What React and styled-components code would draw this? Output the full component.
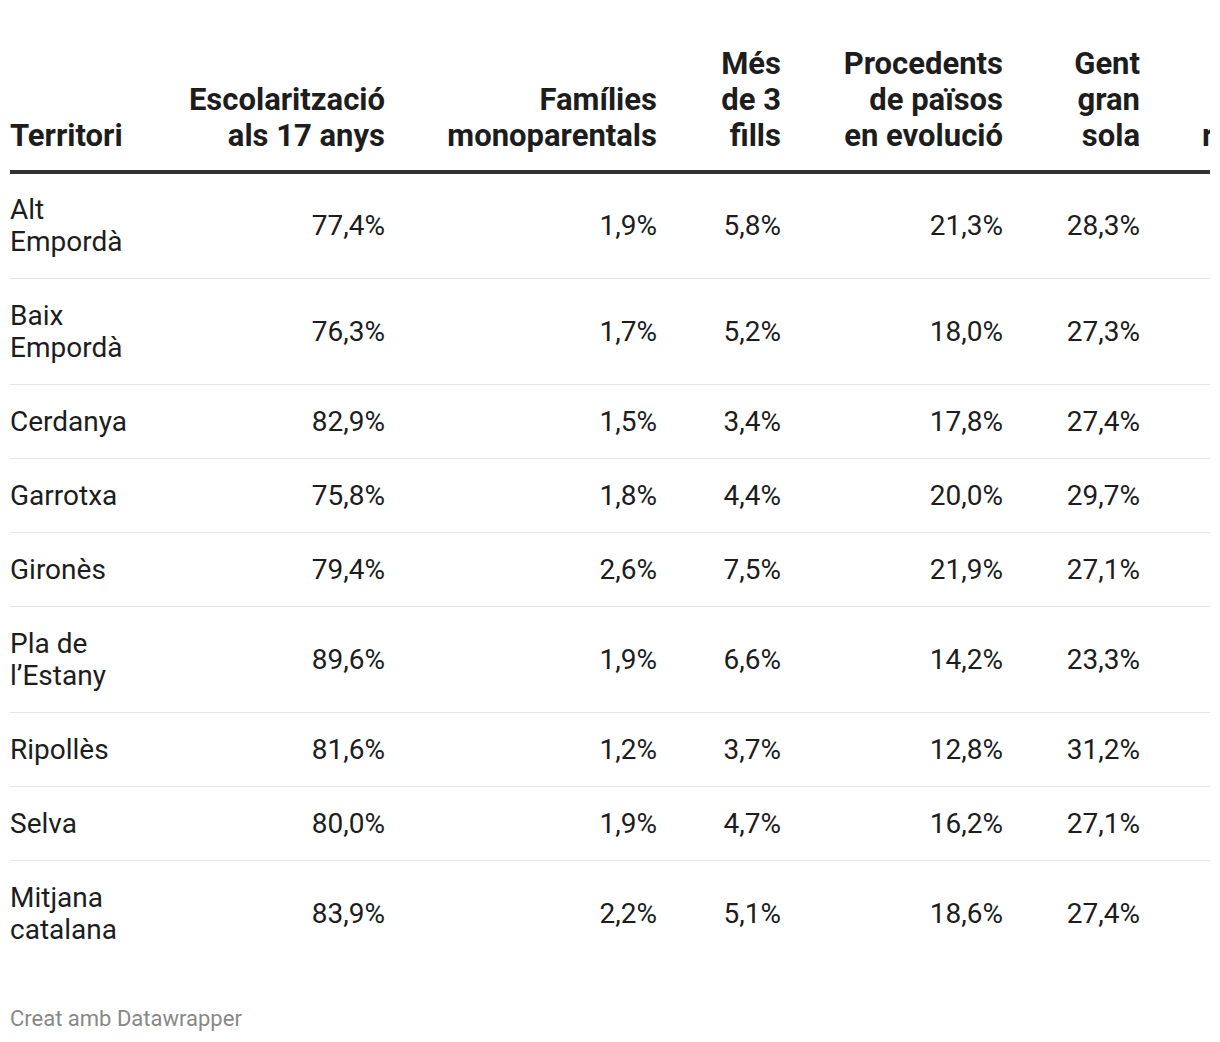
import React from 'react';
import styled, { createGlobalStyle } from 'styled-components';

const GlobalStyle = createGlobalStyle`
  body {
    margin: 0;
    background: #fff;
    font-family: Roboto, "Liberation Sans", sans-serif;
    color: #1d1d1d;
  }
`;

const columns = [
  { key: 'name', label: ['Territori'], width: 130, align: 'left' },
  { key: 'school', label: ['Escolarització', 'als 17 anys'], width: 245, align: 'right' },
  { key: 'single', label: ['Famílies', 'monoparentals'], width: 272, align: 'right' },
  { key: 'kids', label: ['Més', 'de 3', 'fills'], width: 124, align: 'right' },
  { key: 'origin', label: ['Procedents', 'de països', 'en evolució'], width: 222, align: 'right' },
  { key: 'alone', label: ['Gent', 'gran', 'sola'], width: 137, align: 'right' },
  { key: 'jobless', label: ['Atur', 'registrat'], width: 180, align: 'right' },
];

const rows = [
  { name: 'Alt Empordà', school: '77,4%', single: '1,9%', kids: '5,8%', origin: '21,3%', alone: '28,3%', jobless: '11,2%' },
  { name: 'Baix Empordà', school: '76,3%', single: '1,7%', kids: '5,2%', origin: '18,0%', alone: '27,3%', jobless: '10,4%' },
  { name: 'Cerdanya', school: '82,9%', single: '1,5%', kids: '3,4%', origin: '17,8%', alone: '27,4%', jobless: '6,1%' },
  { name: 'Garrotxa', school: '75,8%', single: '1,8%', kids: '4,4%', origin: '20,0%', alone: '29,7%', jobless: '6,9%' },
  { name: 'Gironès', school: '79,4%', single: '2,6%', kids: '7,5%', origin: '21,9%', alone: '27,1%', jobless: '8,3%' },
  { name: 'Pla de l’Estany', school: '89,6%', single: '1,9%', kids: '6,6%', origin: '14,2%', alone: '23,3%', jobless: '5,7%' },
  { name: 'Ripollès', school: '81,6%', single: '1,2%', kids: '3,7%', origin: '12,8%', alone: '31,2%', jobless: '7,0%' },
  { name: 'Selva', school: '80,0%', single: '1,9%', kids: '4,7%', origin: '16,2%', alone: '27,1%', jobless: '9,5%' },
  { name: 'Mitjana catalana', school: '83,9%', single: '2,2%', kids: '5,1%', origin: '18,6%', alone: '27,4%', jobless: '9,1%' },
];

const App = () => (
  <>
    <GlobalStyle />
    <StyledChart>
      <StyledClip>
        <StyledTable>
          <colgroup>
            {columns.map(col => (
              <col key={col.key} style={{ width: `${col.width}px` }} />
            ))}
          </colgroup>
          <thead>
            <tr>
              {columns.map(col => (
                <StyledHead key={col.key} $align={col.align}>
                  {col.label.map((line, i) => (
                    <StyledLine key={i}>{line}</StyledLine>
                  ))}
                </StyledHead>
              ))}
            </tr>
          </thead>
          <tbody>
            {rows.map(row => (
              <StyledRow key={row.name}>
                {columns.map(col => (
                  <StyledCell key={col.key} $align={col.align}>
                    {row[col.key]}
                  </StyledCell>
                ))}
              </StyledRow>
            ))}
          </tbody>
        </StyledTable>
      </StyledClip>
      <StyledFooter>Creat amb Datawrapper</StyledFooter>
    </StyledChart>
  </>
);

const StyledChart = styled.div`
  padding: 46px 10px 0;
`;

const StyledClip = styled.div`
  width: 100%;
  overflow: hidden;
`;

const StyledTable = styled.table`
  table-layout: fixed;
  width: 1310px;
  border-collapse: collapse;
  border-spacing: 0;
`;

const StyledHead = styled.th`
  padding: 0 0 16px;
  vertical-align: bottom;
  text-align: ${p => p.$align};
  font-size: 31px;
  line-height: 36px;
  font-weight: 700;
  color: #1d1d1d;
  border-bottom: 4px solid #333;
  white-space: nowrap;
`;

const StyledLine = styled.span`
  display: block;
`;

const StyledRow = styled.tr`
  border-bottom: 1px solid #e6e6e6;
  &:first-child td {
    padding-top: 20px;
    padding-bottom: 20px;
  }
  &:last-child {
    border-bottom: 0;
  }
`;

const StyledCell = styled.td`
  padding: 21px 0 20px;
  vertical-align: middle;
  text-align: ${p => p.$align};
  font-size: 28px;
  line-height: 32px;
  font-weight: 400;
  color: #1d1d1d;
`;

const StyledFooter = styled.p`
  margin: 40px 0 0;
  font-size: 22px;
  line-height: 26px;
  color: #888;
`;

export default App;
